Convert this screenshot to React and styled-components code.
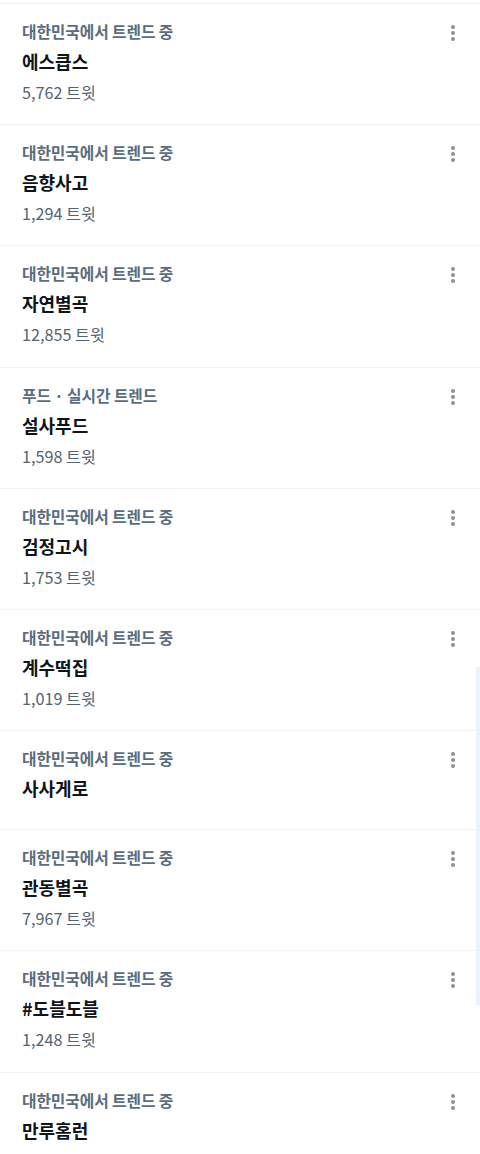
import React from "react";
import styled, { createGlobalStyle } from "styled-components";

const GlobalStyle = createGlobalStyle`
  html, body {
    margin: 0;
    padding: 0;
    background: #fff;
  }
  body {
    font-family: "Noto Sans CJK KR", "Noto Sans", sans-serif;
    -webkit-font-smoothing: antialiased;
  }
`;

const trends = [
  { category: "대한민국에서 트렌드 중", title: "에스큽스", count: "5,762 트윗" },
  { category: "대한민국에서 트렌드 중", title: "음향사고", count: "1,294 트윗" },
  { category: "대한민국에서 트렌드 중", title: "자연별곡", count: "12,855 트윗" },
  { category: "푸드 · 실시간 트렌드", title: "설사푸드", count: "1,598 트윗" },
  { category: "대한민국에서 트렌드 중", title: "검정고시", count: "1,753 트윗" },
  { category: "대한민국에서 트렌드 중", title: "계수떡집", count: "1,019 트윗" },
  { category: "대한민국에서 트렌드 중", title: "사사게로" },
  { category: "대한민국에서 트렌드 중", title: "관동별곡", count: "7,967 트윗" },
  { category: "대한민국에서 트렌드 중", title: "#도블도블", count: "1,248 트윗" },
  { category: "대한민국에서 트렌드 중", title: "만루홈런", count: "" },
];

// Page shell
const Page = styled.div`
  position: relative;
  width: 480px;
  height: 1154px;
  overflow: hidden;
  padding-top: 3px;
  box-sizing: border-box;
`;

const List = styled.ul`
  list-style: none;
  margin: 0;
  padding: 0;
  border-top: 1px solid #eff3f4;
`;

const Item = styled.li`
  display: flex;
  justify-content: space-between;
  align-items: flex-start;
  padding: 18px 22px ${(p) => (p.$hasCount ? "22.2px" : "29px")} 22px;
  border-bottom: 1px solid #eff3f4;
`;

const Content = styled.div`
  display: flex;
  flex-direction: column;
`;

const Category = styled.span`
  font-size: 15.8px;
  line-height: 20px;
  font-weight: 700;
  color: #5a6d7e;
  letter-spacing: -0.1px;
`;

const Title = styled.span`
  margin-top: 7px;
  font-size: 18px;
  line-height: 24px;
  font-weight: 700;
  color: #0f1419;
`;

const Count = styled.span`
  margin-top: 9px;
  font-size: 16.2px;
  line-height: 20px;
  font-weight: 400;
  color: #536471;
`;

const More = styled.button`
  display: flex;
  flex-direction: column;
  align-items: center;
  gap: 2px;
  margin: 3px 0 0 0;
  padding: 0;
  border: 0;
  background: none;
  width: 10px;
`;

const Dot = styled.span`
  width: 4px;
  height: 4px;
  border-radius: 50%;
  background: #8d9296;
`;

// Thin scroll indicator on the right edge
const ScrollThumb = styled.div`
  position: absolute;
  right: 0;
  top: 667px;
  width: 4px;
  height: 338px;
  background: #eaf3fc;
`;

const App = () => (
  <Page>
    <GlobalStyle />
    <List>
      {trends.map((t, i) => (
        <Item key={i} $hasCount={t.count !== undefined}>
          <Content>
            <Category>{t.category}</Category>
            <Title>{t.title}</Title>
            {t.count ? <Count>{t.count}</Count> : null}
          </Content>
          <More aria-label="더 보기">
            <Dot />
            <Dot />
            <Dot />
          </More>
        </Item>
      ))}
    </List>
    <ScrollThumb />
  </Page>
);

export default App;
